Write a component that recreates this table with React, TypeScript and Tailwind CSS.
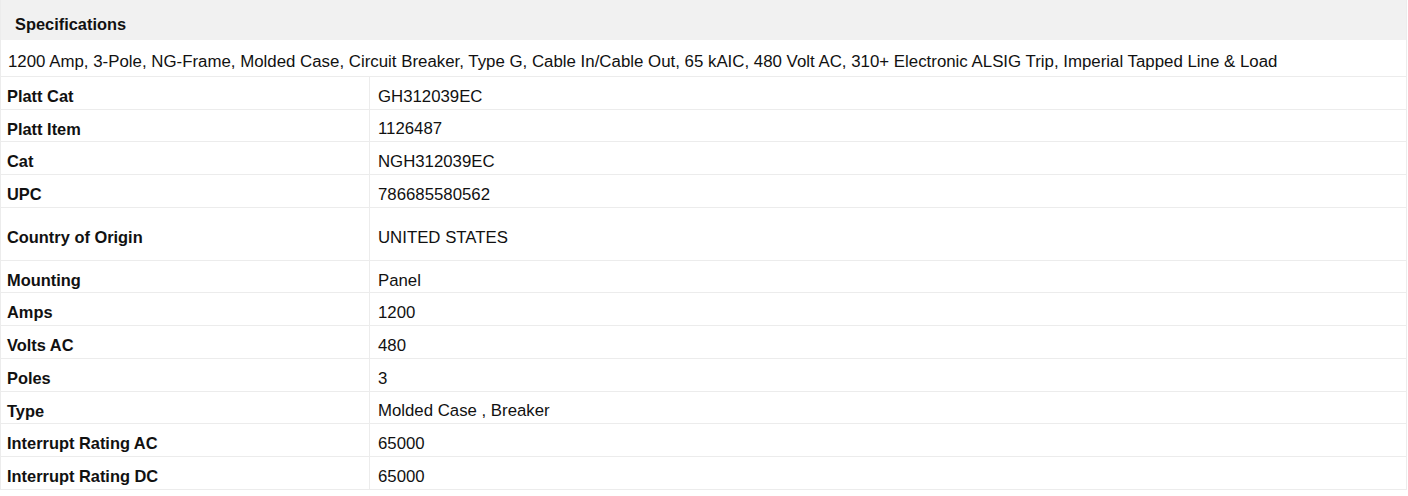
import React from 'react';

const specs: { label: string; value: string; tall?: boolean }[] = [
  { label: 'Platt Cat', value: 'GH312039EC' },
  { label: 'Platt Item', value: '1126487' },
  { label: 'Cat', value: 'NGH312039EC' },
  { label: 'UPC', value: '786685580562' },
  { label: 'Country of Origin', value: 'UNITED STATES', tall: true },
  { label: 'Mounting', value: 'Panel' },
  { label: 'Amps', value: '1200' },
  { label: 'Volts AC', value: '480' },
  { label: 'Poles', value: '3' },
  { label: 'Type', value: 'Molded Case , Breaker' },
  { label: 'Interrupt Rating AC', value: '65000' },
  { label: 'Interrupt Rating DC', value: '65000' },
];

export default function App() {
  return (
    <div className="w-[1408px] h-[496px] bg-white font-['Liberation_Sans',Arial,sans-serif] text-[#111]">
      <div className="w-[1407px] border-r border-l border-[#ececec]">
        <div className="h-[40px] bg-[#f1f1f1] flex items-center pl-[14px] pt-[8px] text-[16.4px] font-bold">
          Specifications
        </div>
        <div className="h-[37px] flex items-center pl-[7px] pt-[8px] text-[16.85px] border-b border-[#ececec]">
          1200 Amp, 3-Pole, NG-Frame, Molded Case, Circuit Breaker, Type G, Cable In/Cable Out, 65 kAIC, 480 Volt AC, 310+ Electronic ALSIG Trip, Imperial Tapped Line &amp; Load
        </div>
        {specs.map((s) => (
          <div
            key={s.label}
            className={`flex border-b border-[#ececec] pt-[7px] ${s.tall ? 'h-[53px]' : 'h-[32.7px]'}`}
          >
            <div className="w-[369px] flex items-center pl-[6px] -mt-[7px] pt-[7px] font-bold text-[16.4px] border-r border-[#ececec]">
              {s.label}
            </div>
            <div className="flex-1 flex items-center pl-[8px] text-[16.8px]">{s.value}</div>
          </div>
        ))}
      </div>
    </div>
  );
}
